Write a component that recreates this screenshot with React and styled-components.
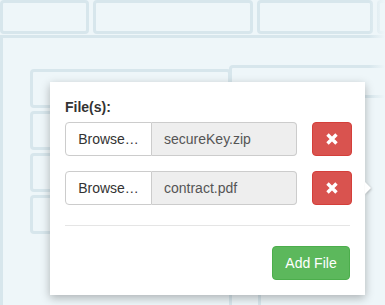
import styled, { createGlobalStyle } from "styled-components";

const GlobalStyle = createGlobalStyle`
  html, body {
    margin: 0;
    background: #eef6f9;
    font-family: "Liberation Sans", Arial, sans-serif;
  }
`;

const Page = styled.div`
  position: relative;
  width: 385px;
  height: 305px;
  overflow: hidden;
  background: #eef6f9;
`;

const TopRow = styled.div`
  display: flex;
  gap: 4px;
  margin-bottom: 1px;
`;

const HeadCell = styled.div`
  box-sizing: border-box;
  width: ${(p) => p.$w}px;
  flex-shrink: 0;
  height: 34px;
  border: 3px solid #d7e6ec;
  border-radius: 4px;
`;

const Panel = styled.div`
  display: flex;
  border-left: 3px solid #d7e6ec;
  border-top: 3px solid #d7e6ec;
  padding: 27px 0 0 27px;
  height: 300px;
`;

const LeftCol = styled.div`
  display: flex;
  flex-direction: column;
  gap: 3px;
  width: 201px;
  margin-top: 4px;
  flex-shrink: 0;
`;

const RightCol = styled.div`
  display: flex;
  flex-direction: column;
  flex: 1;
  margin-left: -2px;
`;

const Box = styled.div`
  box-sizing: border-box;
  height: ${(p) => p.$h}px;
  width: ${(p) => p.$w || "auto"};
  margin-top: ${(p) => p.$mt || 0}px;
  border: 3px solid #d7e6ec;
  border-radius: 4px;
`;

const Fade = styled.div`
  position: absolute;
  top: 0;
  right: 0;
  width: 16px;
  height: 100%;
  background: linear-gradient(to right, rgba(238, 246, 249, 0), #eef6f9);
`;

const Popover = styled.div`
  position: absolute;
  left: 50px;
  top: 82px;
  width: 315px;
  box-sizing: border-box;
  padding: 15px 13px 15px 15px;
  background: #fff;
  box-shadow: 0 3px 9px rgba(0, 0, 0, 0.28);
`;

const Arrow = styled.div`
  position: absolute;
  right: -6px;
  top: 100px;
  width: 0;
  height: 0;
  border-top: 6px solid transparent;
  border-bottom: 6px solid transparent;
  border-left: 6px solid #fff;
  filter: drop-shadow(1px 1px 1px rgba(0, 0, 0, 0.18));
`;

const Label = styled.div`
  font-size: 14px;
  line-height: 20px;
  font-weight: bold;
  color: #333;
  margin-bottom: 5px;
`;

const FileRow = styled.div`
  display: flex;
  gap: 15px;
  height: 34px;
  margin-bottom: 15px;

  &:last-of-type {
    margin-bottom: 0;
  }
`;

const InputGroup = styled.div`
  display: flex;
  flex: 1;
  font-size: 14px;
`;

const BrowseButton = styled.div`
  box-sizing: border-box;
  width: 87px;
  display: flex;
  align-items: center;
  justify-content: center;
  background: #fff;
  border: 1px solid #ccc;
  border-radius: 4px 0 0 4px;
  color: #333;
`;

const FileName = styled.div`
  flex: 1;
  display: flex;
  align-items: center;
  padding: 0 12px;
  background: #eee;
  border: 1px solid #ccc;
  border-left: 0;
  border-radius: 0 4px 4px 0;
  color: #555;
`;

const DangerButton = styled.div`
  box-sizing: border-box;
  width: 40px;
  display: flex;
  align-items: center;
  justify-content: center;
  background: #d9534f;
  border: 1px solid #d43f3a;
  border-radius: 4px;
`;

const Divider = styled.div`
  height: 1px;
  background: #e5e5e5;
  margin: 20px 2px 20px 0;
`;

const Footer = styled.div`
  display: flex;
  justify-content: flex-end;
  margin-right: 2px;
`;

const SuccessButton = styled.div`
  box-sizing: border-box;
  width: 78px;
  height: 34px;
  display: flex;
  align-items: center;
  justify-content: center;
  background: #5cb85c;
  border: 1px solid #4cae4c;
  border-radius: 4px;
  color: #fff;
  font-size: 14px;
`;

const RemoveIcon = () => (
  <svg width="12" height="12" viewBox="0 0 12 12">
    <path d="M1.5 1.5 L10.5 10.5 M10.5 1.5 L1.5 10.5" stroke="#fff" strokeWidth="3.4" />
  </svg>
);

const files = ["secureKey.zip", "contract.pdf"];

export default function App() {
  return (
    <>
      <GlobalStyle />
      <Page>
        <TopRow>
          <HeadCell $w={89} />
          <HeadCell $w={160} />
          <HeadCell $w={116} />
          <HeadCell $w={60} />
        </TopRow>
        <Panel>
          <LeftCol>
            <Box $h={39} />
            <Box $h={39} />
            <Box $h={39} />
            <Box $h={39} />
          </LeftCol>
          <RightCol>
            <Box $h={33} $w="200px" />
            <Box $h={40} $w="32px" $mt={193} />
          </RightCol>
        </Panel>
        <Fade />
        <Popover>
          <Arrow />
          <Label>File(s):</Label>
          {files.map((f) => (
            <FileRow key={f}>
              <InputGroup>
                <BrowseButton>Browse…</BrowseButton>
                <FileName>{f}</FileName>
              </InputGroup>
              <DangerButton>
                <RemoveIcon />
              </DangerButton>
            </FileRow>
          ))}
          <Divider />
          <Footer>
            <SuccessButton>Add File</SuccessButton>
          </Footer>
        </Popover>
      </Page>
    </>
  );
}
